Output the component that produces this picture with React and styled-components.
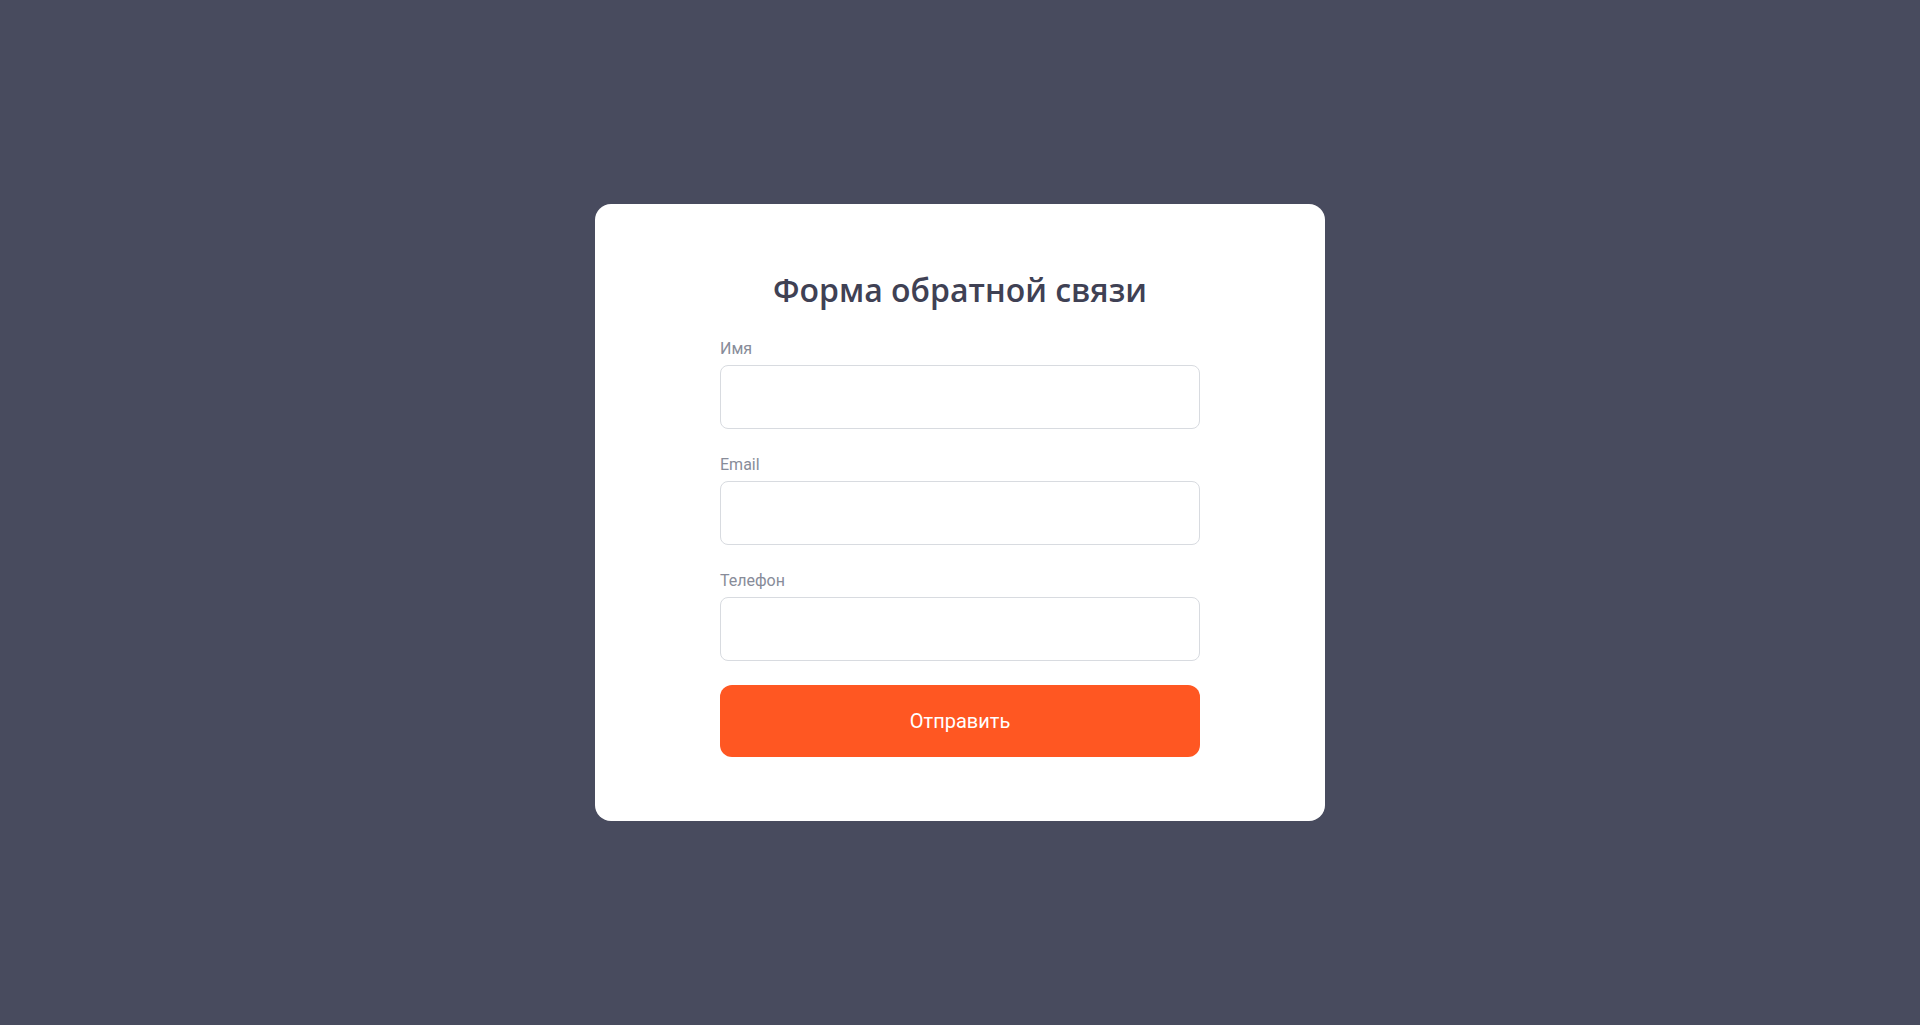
import React from 'react';
import styled, { createGlobalStyle } from 'styled-components';

const GlobalStyle = createGlobalStyle`
    * {
        box-sizing: border-box;
    }
    body {
        margin: 0;
        background: #484b5e;
        font-family: 'Open Sans', 'Noto Sans', sans-serif;
    }
`;

const Page = styled.div`
    min-height: 100vh;
    display: flex;
    align-items: center;
    justify-content: center;
`;

const Card = styled.form`
    width: 730px;
    background: #ffffff;
    border-radius: 16px;
    padding: 60px 125px 64px;
    display: flex;
    flex-direction: column;
`;

const Title = styled.h1`
    margin: 0 0 23px;
    text-align: center;
    font-family: 'Open Sans', sans-serif;
    font-weight: 600;
    font-size: 32px;
    line-height: 52px;
    color: #3f4154;
`;

const Fields = styled.div`
    display: flex;
    flex-direction: column;
    gap: 26px;
`;

const Field = styled.label`
    display: flex;
    flex-direction: column;
    gap: 6px;
`;

const Label = styled.span`
    font-family: Roboto, 'Liberation Sans', sans-serif;
    font-size: 16px;
    line-height: 20px;
    color: #888c99;
`;

const Input = styled.input`
    height: 64px;
    width: 100%;
    border: 1.5px solid #d8dbe0;
    border-radius: 8px;
    padding: 0 16px;
    font-family: Roboto, 'Liberation Sans', sans-serif;
    font-size: 16px;
    color: #3f4154;
    outline: none;
    background: #ffffff;
`;

const Submit = styled.button`
    margin-top: 24px;
    height: 72px;
    width: 100%;
    border: none;
    border-radius: 12px;
    background: #ff5722;
    color: #ffffff;
    font-family: Roboto, 'Liberation Sans', sans-serif;
    font-size: 20px;
    cursor: pointer;
`;

const fields = [
    { name: 'name', label: 'Имя', type: 'text' },
    { name: 'email', label: 'Email', type: 'email' },
    { name: 'phone', label: 'Телефон', type: 'tel' },
];

const App = () => {
    return (
        <>
            <GlobalStyle />
            <Page>
                <Card onSubmit={(e) => e.preventDefault()}>
                    <Title>Форма обратной связи</Title>
                    <Fields>
                        {fields.map((f) => (
                            <Field key={f.name}>
                                <Label>{f.label}</Label>
                                <Input name={f.name} type={f.type} />
                            </Field>
                        ))}
                    </Fields>
                    <Submit type='submit'>Отправить</Submit>
                </Card>
            </Page>
        </>
    );
};

export default App;
